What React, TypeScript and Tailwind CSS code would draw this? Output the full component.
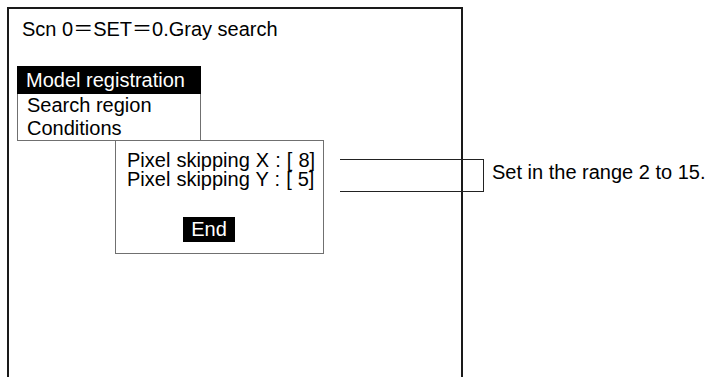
import React from 'react'

const MENU_ITEMS = ['Model registration', 'Search region', 'Conditions']

export default function App() {
  return (
    <div
      className="relative w-[718px] h-[377px] overflow-hidden bg-white text-black text-[20px] leading-[20px]"
      style={{ fontFamily: '"Liberation Sans", Arial, "Noto Sans CJK JP", sans-serif' }}
    >
      {/* screen frame */}
      <div className="ml-[7px] mt-[7px] w-[456px] h-[370px] border-2 border-b-0 border-[#1a1a1a] pt-[10px] pl-[13px] flex flex-col items-start">
        <p className="leading-[20px] whitespace-pre">Scn 0＝SET＝0.Gray search</p>

        {/* menu */}
        <div className="mt-[27px] -ml-[5px] w-[184px] border-x border-b border-[#707070] flex flex-col">
          {MENU_ITEMS.map((item, i) => (
            <div
              key={item}
              className={
                i === 0
                  ? 'h-[28px] leading-[28px] pl-[9px] bg-black text-white -mx-px'
                  : 'h-[23px] leading-[23px] pl-[9px]'
              }
            >
              {item}
            </div>
          ))}
        </div>
      </div>

      {/* setting dialog (popup over the menu) */}
      <div className="absolute left-[115px] top-[140px] w-[209px] h-[114px] border border-[#707070] bg-white pt-[10px] pl-[11px] flex flex-col items-start">
        <div className="leading-[19px] whitespace-pre [word-spacing:0.5px]">Pixel skipping X : [ 8]</div>
        <div className="leading-[19px] whitespace-pre [word-spacing:0.5px]">Pixel skipping Y : [ 5]</div>
        <div className="mt-[28px] ml-[56px] w-[52px] h-[25px] leading-[25px] bg-black text-white text-center">
          End
        </div>
      </div>

      {/* callout */}
      <div className="absolute left-[340px] top-[159px] flex items-start gap-[8px]">
        <div className="w-[144px] h-[33px] border-y border-r border-[#222]" />
        <span className="whitespace-nowrap leading-[20px] mt-[3px]">Set in the range 2 to 15.</span>
      </div>
    </div>
  )
}
